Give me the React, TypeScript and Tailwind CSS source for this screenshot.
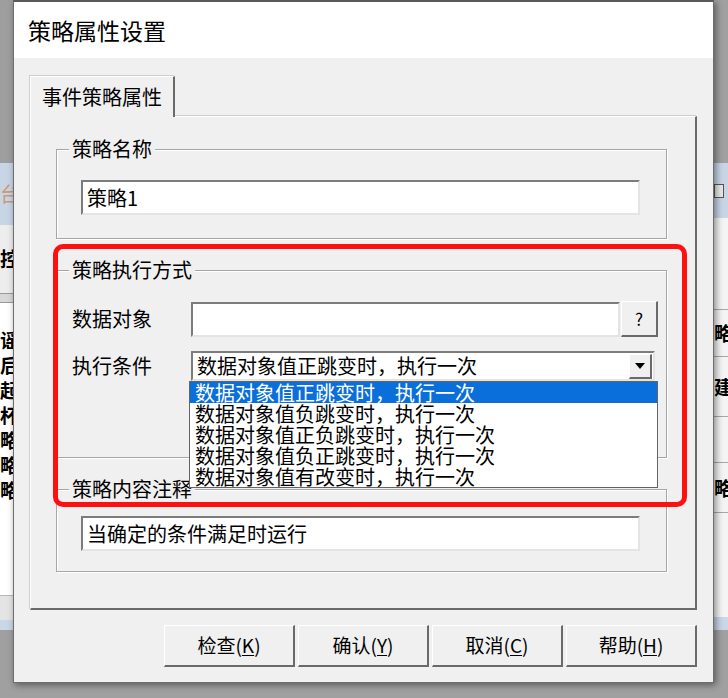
import React from 'react';

const sunken =
  'border-2 border-t-[#7c7c7c] border-l-[#7c7c7c] border-r-[#e4e4e4] border-b-[#e4e4e4] bg-white';
const raised =
  'border-t border-l border-t-white border-l-white border-r-2 border-b-2 border-r-[#6a6a6a] border-b-[#6a6a6a] bg-[#f0f0f0]';

const options = [
  '数据对象值正跳变时，执行一次',
  '数据对象值负跳变时，执行一次',
  '数据对象值正负跳变时，执行一次',
  '数据对象值负正跳变时，执行一次',
  '数据对象值有改变时，执行一次',
];

function Group({ title, className, children }: { title: string; className: string; children: React.ReactNode }) {
  return (
    <fieldset className={`w-[611px] border border-[#a6a6a6] shadow-[inset_1px_1px_0_#fff,1px_1px_0_#fff] ${className}`}>
      <legend className="ml-[12px] px-[3px] bg-[#f0f0f0] text-[20px] leading-[24px]">{title}</legend>
      {children}
    </fieldset>
  );
}

function Button({ label, hotkey }: { label: string; hotkey: string }) {
  return (
    <button className={`w-[131px] h-[42px] flex items-center justify-center text-[19px] ${raised}`}>
      {label}(<span className="underline underline-offset-2">{hotkey}</span>)
    </button>
  );
}

function LeftStrip() {
  return (
    <div className="w-[13px] h-full shrink-0 flex flex-col overflow-hidden">
      <div className="h-[163px] bg-[#9e9e9e]" />
      <div className="h-[62px] bg-[#c7d5e5] flex items-center text-[20px] text-[#c99b7a] overflow-hidden">台</div>
      <div className="h-[68px] bg-[#ededed] pt-[22px] text-[20px] leading-[24px] font-bold overflow-hidden">控</div>
      <div className="h-[10px] bg-[#d8d8d8] border-y border-[#9a9a9a]" />
      <div className="h-[292px] bg-white pt-[24px] flex flex-col text-[19px] leading-[25px] font-bold overflow-hidden">
        {['谣', '后', '起', '杯', '略', '略', '略'].map((c, i) => (
          <span key={i}>{c}</span>
        ))}
      </div>
      <div className="h-[35px] bg-[#e4e4e4] border-t border-[#b8b8b8] flex flex-col justify-end">
        <div className="h-[10px] bg-[#c9d7e6]" />
      </div>
      <div className="flex-1 bg-[#a0a0a0]" />
    </div>
  );
}

function RightStrip() {
  return (
    <div className="w-[14px] h-full shrink-0 flex flex-col overflow-hidden">
      <div className="h-[163px] bg-[#a0a0a0]" />
      <div className="h-[55px] bg-[#c7d5e5] flex items-center">
        <div className="w-[10px] h-[14px] border border-[#555] bg-[#e8e8e8]" />
      </div>
      <div className="h-[399px] bg-[#f4f4f4] flex flex-col text-[19px] leading-[24px] font-bold overflow-hidden">
        <div className="h-[92px] border-b border-[#a8a8a8]" />
        <div className="h-[47px] border-b border-[#a8a8a8] flex items-center">略</div>
        <div className="h-[60px] border-b border-[#a8a8a8] flex items-center">建</div>
        <div className="h-[46px] border-b border-[#a8a8a8]" />
        <div className="h-[50px] border-b border-[#a8a8a8] flex items-center">略</div>
        <div className="flex-1" />
      </div>
      <div className="h-[13px] bg-[#c9d7e6]" />
      <div className="flex-1 bg-[#a0a0a0]" />
    </div>
  );
}

export default function App() {
  return (
    <div className="w-[728px] h-[698px] bg-[#a0a0a0] flex overflow-hidden text-black font-['Noto_Sans_CJK_SC',sans-serif]">
      <LeftStrip />

      <div className="relative z-10 w-[701px] h-[683px] shrink-0 flex flex-col bg-[#f0f0f0] border border-[#6e6e6e] border-t-2 border-t-[#5a5a5a] shadow-[2px_2px_7px_rgba(0,0,0,0.45)]">
        {/* Title bar */}
        <div className="h-[56px] bg-white flex items-center pl-[14px] text-[23px]">策略属性设置</div>

        <div className="flex-1 flex flex-col px-[16px] pt-[18px]">
          {/* Tab */}
          <div className="flex">
            <div className="relative z-10 -mb-px w-[145px] h-[41px] pl-[11px] pt-[7px] bg-[#f0f0f0] border-t border-l border-white border-r-2 border-r-[#6a6a6a] text-[20px] leading-[26px] shadow-[-1px_-1px_0_#cfcfcf]">
              事件策略属性
            </div>
          </div>

          {/* Tab panel */}
          <div className="relative h-[494px] border-t border-l border-white border-r-2 border-b-2 border-r-[#6a6a6a] border-b-[#6a6a6a] pl-[25px] pt-[20px] flex flex-col shadow-[-1px_-1px_0_#cfcfcf]">
            <Group title="策略名称" className="pt-[19px] pb-[23px]">
              <div className="pl-[24px]">
                <div className={`w-[559px] h-[35px] pl-[4px] flex items-center text-[20px] ${sunken}`}>策略1</div>
              </div>
            </Group>

            <Group title="策略执行方式" className="mt-[19px] pt-[19px] pb-[76px]">
              <div className="pl-[15px]">
                <div className="flex items-center h-[36px]">
                  <span className="w-[119px] text-[20px]">数据对象</span>
                  <div className={`w-[429px] h-[35px] ${sunken}`} />
                  <button className={`ml-[1px] w-[37px] h-[36px] flex items-center justify-center text-[17px] ${raised}`}>?</button>
                </div>
                <div className="flex items-center h-[30px] mt-[14px]">
                  <span className="w-[119px] text-[20px]">执行条件</span>
                  <div className={`relative w-[464px] h-[30px] flex items-center ${sunken}`}>
                    <span className="flex-1 pl-[4px] text-[20px] leading-[24px]">{options[0]}</span>
                    <div className={`w-[23px] h-[25px] mr-[1px] flex items-center justify-center ${raised}`}>
                      <svg width="10" height="6" viewBox="0 0 10 6">
                        <path d="M0 0h10L5 6z" fill="#000" />
                      </svg>
                    </div>

                    {/* Open dropdown list */}
                    <div className="absolute z-20 top-[28px] left-[-4px] w-[469px] h-[107px] bg-white border border-[#646464] flex flex-col">
                      {options.map((o, i) => (
                        <div
                          key={o}
                          className={`h-[21px] pl-[5px] text-[20px] leading-[21px] whitespace-nowrap ${i === 0 ? 'bg-[#0a6fd8] text-white' : ''}`}
                        >
                          {o}
                        </div>
                      ))}
                    </div>
                  </div>
                </div>
              </div>
            </Group>

            <Group title="策略内容注释" className="mt-[19px] pt-[15px] pb-[20px]">
              <div className="pl-[24px]">
                <div className={`w-[559px] h-[35px] pl-[4px] flex items-center text-[20px] ${sunken}`}>当确定的条件满足时运行</div>
              </div>
            </Group>

            {/* Red highlight */}
            <div className="absolute z-30 left-[22px] top-[127px] w-[634px] h-[263px] border-[5px] border-[#ff1010] rounded-[10px] pointer-events-none" />
          </div>

          {/* Buttons */}
          <div className="flex justify-end gap-[3px] mt-[15px]">
            <Button label="检查" hotkey="K" />
            <Button label="确认" hotkey="Y" />
            <Button label="取消" hotkey="C" />
            <Button label="帮助" hotkey="H" />
          </div>
        </div>
      </div>

      <RightStrip />
    </div>
  );
}
